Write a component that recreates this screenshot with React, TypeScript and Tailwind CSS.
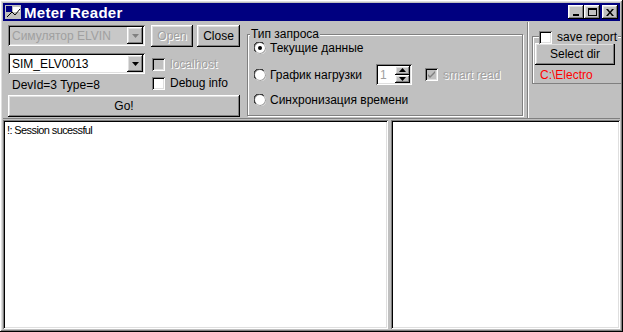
import React from 'react';

const raised =
  'shadow-[inset_-1px_-1px_#000,inset_1px_1px_#fff,inset_-2px_-2px_#808080,inset_2px_2px_#dfdfdf]';
const sunken =
  'shadow-[inset_1px_1px_#808080,inset_-1px_-1px_#fff,inset_2px_2px_#000,inset_-2px_-2px_#dfdfdf]';

function Check({ checked, disabled, label }: { checked?: boolean; disabled?: boolean; label: string }) {
  return (
    <div className="flex items-center gap-[5px] h-[14px] whitespace-nowrap">
      <div className={`w-[13px] h-[13px] shrink-0 ${disabled ? 'bg-[#c0c0c0]' : 'bg-white'} ${sunken} flex items-center justify-center`}>
        {checked && (
          <svg width="9" height="9" viewBox="0 0 9 9">
            <path d="M1 4l2 2 5-5v2l-5 5-2-2z" fill={disabled ? '#808080' : '#000'} />
          </svg>
        )}
      </div>
      <span className={disabled ? 'text-[#a0a0a0] [text-shadow:1px_1px_#fff]' : 'text-black'}>{label}</span>
    </div>
  );
}

function Radio({ checked, label }: { checked?: boolean; label: string }) {
  return (
    <div className="flex items-center gap-[4px] h-[16px] whitespace-nowrap">
      <svg width="12" height="12" viewBox="0 0 12 12">
        <circle cx="6" cy="6" r="5.5" fill="#fff" stroke="#808080" />
        <path d="M1.5 9.5A5 5 0 0 1 9.5 1.5" fill="none" stroke="#000" />
        <path d="M10.5 2.5A5 5 0 0 1 2.5 10.5" fill="none" stroke="#dfdfdf" />
        {checked && <circle cx="6" cy="6" r="2" fill="#000" />}
      </svg>
      <span>{label}</span>
    </div>
  );
}

function Combo({ text, disabled }: { text: string; disabled?: boolean }) {
  return (
    <div className={`w-[137px] h-[21px] ${disabled ? 'bg-[#c8c8c8]' : 'bg-white'} ${sunken} flex items-center p-[2px]`}>
      <span className={`flex-1 pl-[2px] whitespace-nowrap ${disabled ? 'text-[#a0a0a0]' : 'text-black'}`}>{text}</span>
      <div className={`w-[16px] h-[17px] shrink-0 bg-[#c0c0c0] ${raised} flex items-center justify-center`}>
        <svg width="7" height="4" viewBox="0 0 7 4">
          <path d="M0 0h7L3.5 4z" fill={disabled ? '#808080' : '#000'} />
        </svg>
      </div>
    </div>
  );
}

function Btn({ children, disabled, className = '' }: { children: React.ReactNode; disabled?: boolean; className?: string }) {
  return (
    <div
      className={`h-[22px] bg-[#c0c0c0] ${raised} flex items-center justify-center ${
        disabled ? 'text-[#a0a0a0] [text-shadow:1px_1px_#fff]' : 'text-black'
      } ${className}`}
    >
      {children}
    </div>
  );
}

export default function App() {
  return (
    <div
      className={`w-[623px] h-[332px] bg-[#c0c0c0] ${raised} p-[3px] flex flex-col text-[12px] leading-none text-black`}
      style={{ fontFamily: '"Liberation Sans", Arial, sans-serif' }}
    >
      {/* title bar */}
      <div className="h-[18px] bg-[#000080] flex items-center pl-[2px] pr-[2px]">
        <svg width="16" height="14" viewBox="0 0 16 14" className="mr-[3px]">
          <rect x="0" y="0" width="16" height="14" fill="#c0c0c0" />
          <rect x="1" y="1" width="6" height="6" fill="#000080" />
          <rect x="8" y="2" width="7" height="5" fill="#fff" />
          <path d="M2 12l5-5 3 3 5-6" stroke="#000" fill="none" />
        </svg>
        <span className="text-white font-bold text-[15px] tracking-[0.3px] flex-1">Meter Reader</span>
        <div className="flex items-center">
          <div className={`w-[16px] h-[14px] bg-[#c0c0c0] ${raised} flex items-end justify-center pb-[3px]`}>
            <div className="w-[6px] h-[2px] bg-black" />
          </div>
          <div className={`w-[16px] h-[14px] bg-[#c0c0c0] ${raised} flex items-center justify-center`}>
            <div className="w-[9px] h-[8px] border border-black border-t-2" />
          </div>
          <div className={`w-[16px] h-[14px] bg-[#c0c0c0] ${raised} flex items-center justify-center ml-[2px]`}>
            <svg width="8" height="7" viewBox="0 0 8 7">
              <path d="M0 0h2l2 2.5L6 0h2L5 3.5 8 7H6L4 4.5 2 7H0l3-3.5z" fill="#000" />
            </svg>
          </div>
        </div>
      </div>

      {/* top panel */}
      <div className="h-[97px] flex mt-[1px] border-b border-b-[#808080]">
        <div className="flex-1 flex pl-[5px] pt-[3px] border-r border-r-[#808080]">
          <div className="flex flex-col w-[232px]">
            <div className="flex">
              <div className="flex flex-col w-[143px]">
                <Combo text="Симулятор ELVIN" disabled />
                <div className="mt-[7px]">
                  <Combo text="SIM_ELV0013" />
                </div>
                <div className="mt-[4px] pl-[4px] h-[14px] flex items-center">DevId=3 Type=8</div>
              </div>
              <div className="flex flex-col">
                <div className="flex gap-[4px]">
                  <Btn disabled className="w-[42px]">Open</Btn>
                  <Btn className="w-[43px]">Close</Btn>
                </div>
                <div className="mt-[10px] pl-[1px]">
                  <Check disabled label="localhost" />
                </div>
                <div className="mt-[5px] pl-[1px]">
                  <Check label="Debug info" />
                </div>
              </div>
            </div>
            <Btn className="mt-[3px] w-[232px]">Go!</Btn>
          </div>
          <div className="ml-[7px] mt-[9px] w-[276px] h-[82px] relative border border-[#808080] shadow-[1px_1px_#fff,inset_1px_1px_#fff] pl-[6px] pt-[5px]">
            <span className="absolute -top-[7px] left-[2px] bg-[#c0c0c0] px-[1px]">Тип запроса</span>
            <Radio checked label="Текущие данные" />
            <div className="flex items-center mt-[8px] h-[21px]">
              <Radio label="График нагрузки" />
              <div className={`ml-[14px] w-[36px] h-[21px] bg-white ${sunken} flex items-center p-[2px]`}>
                <span className="flex-1 pl-[2px] text-[#a0a0a0]">1</span>
                <div className="w-[15px] h-[17px] flex flex-col">
                  <div className={`flex-1 bg-[#c0c0c0] ${raised} flex items-center justify-center`}>
                    <svg width="7" height="4" viewBox="0 0 7 4"><path d="M0 4h7L3.5 0z" fill="#000" /></svg>
                  </div>
                  <div className={`flex-1 bg-[#c0c0c0] ${raised} flex items-center justify-center`}>
                    <svg width="7" height="4" viewBox="0 0 7 4"><path d="M0 0h7L3.5 4z" fill="#000" /></svg>
                  </div>
                </div>
              </div>
              <div className="ml-[13px]">
                <Check checked disabled label="smart read" />
              </div>
            </div>
            <div className="mt-[7px]">
              <Radio label="Синхронизация времени" />
            </div>
          </div>
        </div>
        <div className="w-[92px] border-l border-l-white pl-[3px] pt-[14px]">
          <div className="w-[89px] h-[48px] relative border border-[#808080] border-r-0 shadow-[inset_1px_1px_#fff] pt-[6px] pl-[2px]">
            <div className="absolute -top-[7px] left-[6px] bg-[#c0c0c0] pr-[1px]">
              <Check label="save report" />
            </div>
            <Btn className="w-[80px]">Select dir</Btn>
            <div className="mt-[4px] pl-[5px] text-[#ff0000]">C:\Electro</div>
          </div>
        </div>
      </div>

      {/* bottom panes */}
      <div className="flex-1 flex mt-[1px] gap-[3px]">
        <div className={`w-[385px] bg-white ${sunken} px-[4px] pt-[5px] text-[11px] tracking-[-0.6px]`}>!: Session sucessful</div>
        <div className={`flex-1 bg-white ${sunken}`} />
      </div>
    </div>
  );
}
